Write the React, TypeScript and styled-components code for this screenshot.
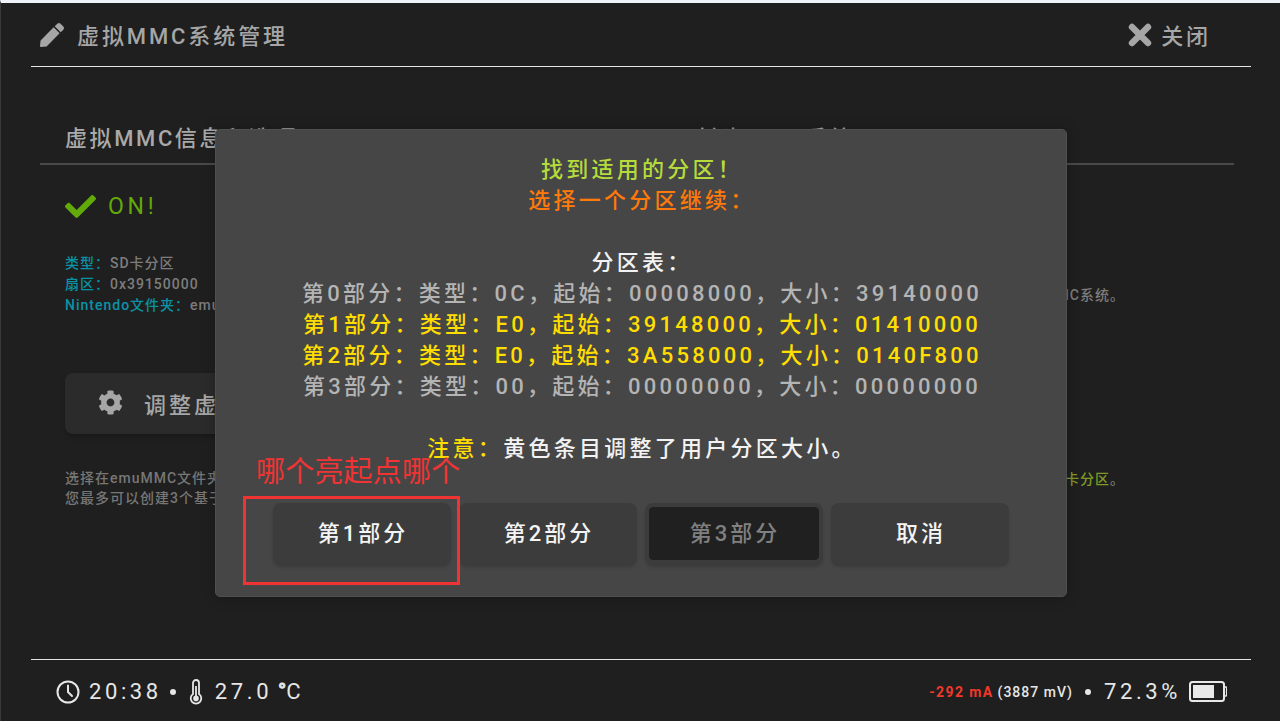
import React from 'react'
import styled, { createGlobalStyle } from 'styled-components'
import { FaCheck, FaCog, FaPen } from 'react-icons/fa'

const Global = createGlobalStyle`
    html, body {
        margin: 0;
        padding: 0;
        background: #1f1f1f;
    }
    * {
        box-sizing: border-box;
    }
`

const Screen = styled.div`
    position: relative;
    width: 1280px;
    height: 721px;
    overflow: hidden;
    display: flex;
    flex-direction: column;
    background: #1f1f1f;
    border-top: 3px solid #eef3f9;
    border-left: 1px solid #3a3a3a;
    font-family: Roboto, "Noto Sans CJK SC", sans-serif;
`

const Header = styled.header`
    height: 64px;
    margin: 0 29px 0 30px;
    padding: 0 40px 0 9px;
    display: flex;
    align-items: center;
    justify-content: space-between;
    border-bottom: 1px solid #e4e4e4;
    flex-shrink: 0;
`

const HeaderItem = styled.div`
    display: flex;
    align-items: center;
    gap: ${p => p.$gap}px;
    color: #a6a6a6;
    font-size: 22px;
    font-weight: 500;
    letter-spacing: 2.9px;
    svg {
        width: 24px;
        height: 24px;
    }
`

const HeaderLabel = styled.span`
    padding-bottom: 2px;
`

const Body = styled.main`
    flex: 1;
    display: grid;
    grid-template-columns: 600px 594px;
    padding: 59px 0 0 39px;
    align-items: start;
`

const Column = styled.section`
    display: flex;
    flex-direction: column;
`

const SectionTitle = styled.h2`
    margin: 0;
    height: 39px;
    padding-left: ${p => p.$indent}px;
    border-bottom: 2px solid #4a4a4a;
    color: #a9a9a9;
    font-size: 22px;
    line-height: 26px;
    font-weight: 500;
    letter-spacing: 2.6px;
    white-space: nowrap;
`

const Status = styled.div`
    margin: 23px 0 0 25px;
    display: flex;
    align-items: center;
    gap: 12px;
    height: 36px;
    color: #62a90a;
    font-size: 23px;
    letter-spacing: 3.8px;
    svg {
        width: 31px;
        height: 31px;
    }
`

const InfoList = styled.div`
    margin: 29px 0 0 25px;
    display: flex;
    flex-direction: column;
`

const InfoRow = styled.div`
    font-size: 14px;
    line-height: 21px;
    font-weight: 500;
    letter-spacing: 1px;
    color: #7d7d7d;
    white-space: nowrap;
`

const InfoKey = styled.span`
    color: #0a93a6;
`

const WideButton = styled.div`
    margin: 57px 0 0 25px;
    width: 520px;
    height: 61px;
    display: flex;
    align-items: center;
    gap: 21px;
    padding: 0 0 2px 33px;
    border-radius: 8px;
    background: #2b2b2b;
    box-shadow: 0 3px 5px rgba(0, 0, 0, 0.2);
    color: #a6a6a6;
    font-size: 22px;
    font-weight: 500;
    letter-spacing: 3px;
    svg {
        width: 25px;
        height: 25px;
    }
`

const Note = styled.p`
    margin: 34px 0 0 25px;
    color: #777;
    font-size: 14px;
    line-height: 20px;
    font-weight: 500;
    letter-spacing: 1px;
    white-space: nowrap;
`

const SideText = styled.p`
    margin: ${p => p.$top}px 0 0;
    padding-right: 109px;
    text-align: right;
    color: #7d7d7d;
    font-size: 14px;
    line-height: 20px;
    font-weight: 500;
    letter-spacing: 1px;
    white-space: nowrap;
`

const Accent = styled.span`
    color: #7f9a26;
`

const Footer = styled.footer`
    height: 62px;
    margin: 0 29px 0 30px;
    padding: 2px 24px 0 25px;
    display: flex;
    align-items: center;
    justify-content: space-between;
    border-top: 1px solid #e4e4e4;
    flex-shrink: 0;
    color: #e6e6e6;
`

const FooterGroup = styled.div`
    display: flex;
    align-items: center;
`

const Reading = styled.span`
    font-size: 22px;
    letter-spacing: 3.6px;
    margin-left: ${p => p.$gap || 0}px;
`

const Degree = styled.span`
    margin-left: 6px;
    letter-spacing: 0;
    -webkit-text-stroke: 1px #e6e6e6;
`

const Dot = styled.span`
    width: 6px;
    height: 6px;
    border-radius: 50%;
    background: #e6e6e6;
    margin: 0 ${p => p.$right}px 0 ${p => p.$left}px;
`

const Current = styled.span`
    color: #f0392b;
    font-size: 14px;
    font-weight: 700;
    letter-spacing: 1.4px;
`

const Voltage = styled.span`
    font-size: 14px;
    font-weight: 500;
    letter-spacing: 1px;
    margin-left: 4px;
`

const BatteryIcon = styled.svg`
    margin-left: 8px;
    display: block;
`

const Overlay = styled.div`
    position: absolute;
    left: 214px;
    top: 126px;
    width: 852px;
    height: 468px;
    padding: 24px 29px 0 57px;
    display: flex;
    flex-direction: column;
    background: #464646;
    border: 1px solid #4f4f4f;
    border-radius: 5px;
    box-shadow: 0 0 14px rgba(0, 0, 0, 0.25);
`

const Message = styled.div`
    width: 736px;
    height: 349px;
    padding-left: 2px;
    text-align: center;
    font-size: 22px;
    line-height: 31px;
    font-weight: 500;
    letter-spacing: 3.25px;
    white-space: nowrap;
`

const Line = styled.div`
    color: ${p => p.$color};
    height: 31px;
    margin-bottom: ${p => p.$after || 0}px;
`

const Warn = styled.span`
    color: #ffdd00;
`

const ButtonRow = styled.div`
    display: flex;
    gap: 8px;
`

const Choice = styled.div`
    width: 178px;
    height: 61px;
    padding: 0 0 5px 2px;
    display: flex;
    align-items: center;
    justify-content: center;
    border-radius: 8px;
    background: #3c3c3c;
    box-shadow: 0 3px 3px rgba(0, 0, 0, 0.16);
    color: ${p => (p.$disabled ? '#808080' : '#f4f4f4')};
    font-size: 22px;
    font-weight: 500;
    letter-spacing: 3px;
    border: ${p => (p.$disabled ? '4px solid #3c3c3c' : 'none')};
    background-clip: padding-box;
    ${p => p.$disabled && 'background-color: #202020;'}
`

const HintText = styled.div`
    position: absolute;
    left: 255px;
    top: 449px;
    color: #f03434;
    font-size: 29px;
    line-height: 40px;
    letter-spacing: 0.2px;
    white-space: nowrap;
`

const HintBox = styled.div`
    position: absolute;
    left: 242px;
    top: 493px;
    width: 217px;
    height: 89px;
    border: 3px solid #f03434;
`

function CloseIcon() {
    return (
        <svg viewBox="0 0 24 24" fill="none" stroke="#a6a6a6" strokeWidth="6.4" strokeLinecap="round">
            <path d="M4 4l16 16M20 4L4 20" />
        </svg>
    )
}

function Clock() {
    return (
        <svg width="24" height="24" viewBox="0 0 24 24" fill="none" stroke="#e6e6e6" strokeWidth="2" strokeLinecap="round" strokeLinejoin="round">
            <circle cx="12" cy="12" r="10.5" />
            <path d="M12 5.5V12l4 4" />
        </svg>
    )
}

function Thermometer() {
    return (
        <svg width="14" height="26" viewBox="0 0 14 26" fill="none" stroke="#e6e6e6" strokeWidth="1.8">
            <path d="M4 15V4a3 3 0 0 1 6 0v11a5.3 5.3 0 1 1-6 0z" />
            <circle cx="7" cy="19.4" r="2.8" fill="#e6e6e6" stroke="none" />
            <path d="M7 7v11" />
        </svg>
    )
}

function Battery() {
    return (
        <BatteryIcon width="38" height="21" viewBox="0 0 38 21">
            <rect x="1" y="1" width="34" height="19" rx="2.5" fill="none" stroke="#e8e8e8" strokeWidth="2" />
            <rect x="4" y="4" width="21" height="13" fill="#e8e8e8" />
            <path d="M36 6h1a1 1 0 0 1 .6 1v7a1 1 0 0 1-.6 1h-1" fill="none" stroke="#e8e8e8" strokeWidth="1.4" />
        </BatteryIcon>
    )
}

function App() {
    return (
        <>
            <Global />
            <Screen>
                <Header>
                    <HeaderItem $gap={13}>
                        <FaPen />
                        <HeaderLabel>虚拟MMC系统管理</HeaderLabel>
                    </HeaderItem>
                    <HeaderItem $gap={9}>
                        <CloseIcon />
                        <HeaderLabel>关闭</HeaderLabel>
                    </HeaderItem>
                </Header>

                <Body>
                    <Column>
                        <SectionTitle $indent={25}>虚拟MMC信息和选项</SectionTitle>
                        <Status>
                            <FaCheck />
                            ON!
                        </Status>
                        <InfoList>
                            <InfoRow><InfoKey>类型：</InfoKey>SD卡分区</InfoRow>
                            <InfoRow><InfoKey>扇区：</InfoKey>0x39150000</InfoRow>
                            <InfoRow><InfoKey>Nintendo文件夹：</InfoKey>emuMMC</InfoRow>
                        </InfoList>
                        <WideButton>
                            <FaCog />
                            调整虚拟MMC
                        </WideButton>
                        <Note>
                            选择在emuMMC文件夹中
                            <br />
                            您最多可以创建3个基于
                        </Note>
                    </Column>
                    <Column>
                        <SectionTitle $indent={55}>创建MMC系统</SectionTitle>
                        <SideText $top={120}>虚拟MMC系统。</SideText>
                        <SideText $top={164}><Accent>SD卡分区</Accent>。</SideText>
                    </Column>
                </Body>

                <Footer>
                    <FooterGroup>
                        <Clock />
                        <Reading $gap={9}>20:38</Reading>
                        <Dot $left={8} $right={13} />
                        <Thermometer />
                        <Reading $gap={12}>27.0<Degree>°</Degree>C</Reading>
                    </FooterGroup>
                    <FooterGroup>
                        <Current>-292 mA</Current>
                        <Voltage>(3887 mV)</Voltage>
                        <Dot $left={12} $right={13} />
                        <Reading>72.3%</Reading>
                        <Battery />
                    </FooterGroup>
                </Footer>

                <Overlay>
                    <Message>
                        <Line $color="#b6dc3c">找到适用的分区！</Line>
                        <Line $color="#ff7a0a" $after={31}>选择一个分区继续：</Line>
                        <Line $color="#f2f2f2">分区表：</Line>
                        <Line $color="#b4b4b4">第0部分：类型：0C，起始：00008000，大小：39140000</Line>
                        <Line $color="#ffdd00">第1部分：类型：E0，起始：39148000，大小：01410000</Line>
                        <Line $color="#ffdd00">第2部分：类型：E0，起始：3A558000，大小：0140F800</Line>
                        <Line $color="#b4b4b4" $after={31}>第3部分：类型：00，起始：00000000，大小：00000000</Line>
                        <Line $color="#f2f2f2"><Warn>注意：</Warn>黄色条目调整了用户分区大小。</Line>
                    </Message>
                    <ButtonRow>
                        <Choice>第1部分</Choice>
                        <Choice>第2部分</Choice>
                        <Choice $disabled>第3部分</Choice>
                        <Choice>取消</Choice>
                    </ButtonRow>
                </Overlay>

                <HintText>哪个亮起点哪个</HintText>
                <HintBox />
            </Screen>
        </>
    )
}

export default App
